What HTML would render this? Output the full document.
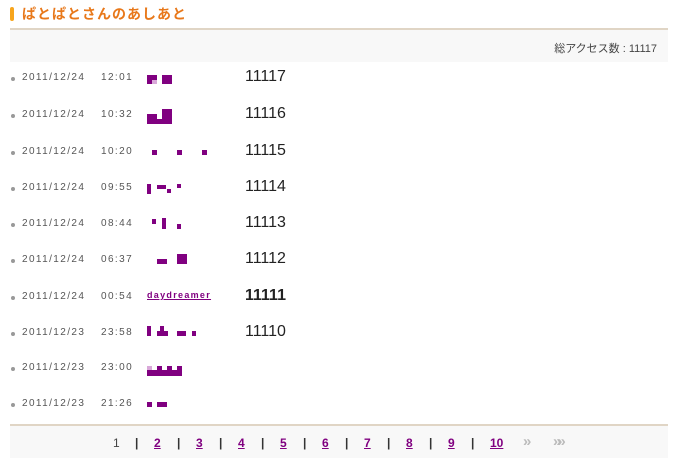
<!DOCTYPE html>
<html><head><meta charset="utf-8"><style>
body{margin:0;width:677px;height:463px;background:#fff;position:relative;font-family:"Liberation Sans","Noto Sans CJK JP",sans-serif;overflow:hidden}
.a{position:absolute}
.p{position:absolute;background:#800080}
.l{background:#d9a8d9}
.d{position:absolute;left:11px;width:4px;height:4px;border-radius:50%;background:#999}
.t,.u{position:absolute;font-size:10px;color:#555;letter-spacing:1.4px;white-space:pre;line-height:12px}
.t{left:22px}.u{left:101px}
.n{position:absolute;left:245px;font-size:16px;color:#222}
.pg{position:absolute;top:436px;font-size:12px;font-weight:bold;font-family:"Liberation Sans Narrow","Liberation Sans",sans-serif;color:#800080;text-decoration:underline}
.sep{position:absolute;top:436px;font-size:12px;color:#333;font-weight:bold}
</style></head><body>
<div class="a" style="left:10px;top:7px;width:4px;height:14px;background:#f7a51c;border-radius:2px"></div>
<div class="a" style="left:22px;top:4px;font-size:14px;font-weight:bold;color:#e8781a;letter-spacing:1px">ぱとぱとさんのあしあと</div>
<div class="a" style="left:10px;top:28px;width:658px;height:2px;background:#e0d5c5"></div>
<div class="a" style="left:10px;top:30px;width:658px;height:32px;background:#f8f8f8"></div>
<div class="a" style="right:20px;top:40px;font-size:11px;color:#444">総アクセス数 : 11117</div>

<div class="d" style="top:77px"></div><div class="t" style="top:72px">2011/12/24</div><div class="u" style="top:72px">12:01</div><div class="n" style="top:68px">11117</div>
<div class="p" style="left:147px;top:75px;width:10px;height:9px"></div><div class="p l" style="left:152px;top:80px;width:5px;height:4px"></div><div class="p" style="left:162px;top:75px;width:10px;height:9px"></div>

<div class="d" style="top:114px"></div><div class="t" style="top:109px">2011/12/24</div><div class="u" style="top:109px">10:32</div><div class="n" style="top:105px">11116</div>
<div class="p" style="left:147px;top:114px;width:10px;height:10px"></div><div class="p" style="left:157px;top:119px;width:5px;height:5px"></div><div class="p" style="left:162px;top:109px;width:10px;height:15px"></div>

<div class="d" style="top:151px"></div><div class="t" style="top:146px">2011/12/24</div><div class="u" style="top:146px">10:20</div><div class="n" style="top:142px">11115</div>
<div class="p" style="left:152px;top:150px;width:5px;height:5px"></div><div class="p" style="left:177px;top:150px;width:5px;height:5px"></div><div class="p" style="left:202px;top:150px;width:5px;height:5px"></div>

<div class="d" style="top:187px"></div><div class="t" style="top:182px">2011/12/24</div><div class="u" style="top:182px">09:55</div><div class="n" style="top:178px">11114</div>
<div class="p" style="left:147px;top:184px;width:4px;height:10px"></div><div class="p" style="left:157px;top:185px;width:9px;height:4px"></div><div class="p" style="left:167px;top:189px;width:4px;height:4px"></div><div class="p" style="left:177px;top:184px;width:4px;height:4px"></div>

<div class="d" style="top:223px"></div><div class="t" style="top:218px">2011/12/24</div><div class="u" style="top:218px">08:44</div><div class="n" style="top:214px">11113</div>
<div class="p" style="left:152px;top:219px;width:4px;height:5px"></div><div class="p" style="left:162px;top:218px;width:4px;height:11px"></div><div class="p" style="left:177px;top:224px;width:4px;height:5px"></div>

<div class="d" style="top:259px"></div><div class="t" style="top:254px">2011/12/24</div><div class="u" style="top:254px">06:37</div><div class="n" style="top:250px">11112</div>
<div class="p" style="left:157px;top:259px;width:10px;height:5px"></div><div class="p" style="left:177px;top:254px;width:10px;height:10px"></div>

<div class="d" style="top:296px"></div><div class="t" style="top:291px">2011/12/24</div><div class="u" style="top:291px">00:54</div><div class="n" style="top:287px;font-weight:bold">11111</div>
<div class="a" style="left:147px;top:290px;font-size:9px;font-weight:bold;color:#800080;letter-spacing:1.3px;text-decoration:underline">daydreamer</div>

<div class="d" style="top:332px"></div><div class="t" style="top:327px">2011/12/23</div><div class="u" style="top:327px">23:58</div><div class="n" style="top:323px">11110</div>
<div class="p" style="left:147px;top:326px;width:4px;height:10px"></div><div class="p" style="left:157px;top:331px;width:11px;height:5px"></div><div class="p" style="left:160px;top:326px;width:4px;height:5px"></div><div class="p" style="left:177px;top:331px;width:9px;height:5px"></div><div class="p" style="left:192px;top:331px;width:4px;height:5px"></div>

<div class="d" style="top:367px"></div><div class="t" style="top:362px">2011/12/23</div><div class="u" style="top:362px">23:00</div>
<div class="p" style="left:147px;top:370px;width:35px;height:6px"></div><div class="p l" style="left:147px;top:366px;width:5px;height:4px"></div><div class="p" style="left:157px;top:366px;width:5px;height:4px"></div><div class="p" style="left:167px;top:366px;width:5px;height:4px"></div><div class="p" style="left:177px;top:366px;width:5px;height:4px"></div>

<div class="d" style="top:403px"></div><div class="t" style="top:398px">2011/12/23</div><div class="u" style="top:398px">21:26</div>
<div class="p" style="left:147px;top:402px;width:5px;height:5px"></div><div class="p" style="left:157px;top:402px;width:10px;height:5px"></div>

<div class="a" style="left:10px;top:424px;width:658px;height:2px;background:#e0d5c5"></div>
<div class="a" style="left:10px;top:426px;width:658px;height:32px;background:#f8f8f8"></div>
<div class="sep" style="left:113px;color:#444;font-weight:normal">1</div>
<div class="sep" style="left:135px">|</div><div class="pg" style="left:154px">2</div>
<div class="sep" style="left:177px">|</div><div class="pg" style="left:196px">3</div>
<div class="sep" style="left:219px">|</div><div class="pg" style="left:238px">4</div>
<div class="sep" style="left:261px">|</div><div class="pg" style="left:280px">5</div>
<div class="sep" style="left:303px">|</div><div class="pg" style="left:322px">6</div>
<div class="sep" style="left:345px">|</div><div class="pg" style="left:364px">7</div>
<div class="sep" style="left:387px">|</div><div class="pg" style="left:406px">8</div>
<div class="sep" style="left:429px">|</div><div class="pg" style="left:448px">9</div>
<div class="sep" style="left:471px">|</div><div class="pg" style="left:490px">10</div>
<div class="sep" style="left:523px;top:433px;color:#bbb;font-size:15px">»</div>
<div class="sep" style="left:553px;top:433px;color:#bbb;font-size:15px;letter-spacing:-4px">»»</div>
</body></html>
